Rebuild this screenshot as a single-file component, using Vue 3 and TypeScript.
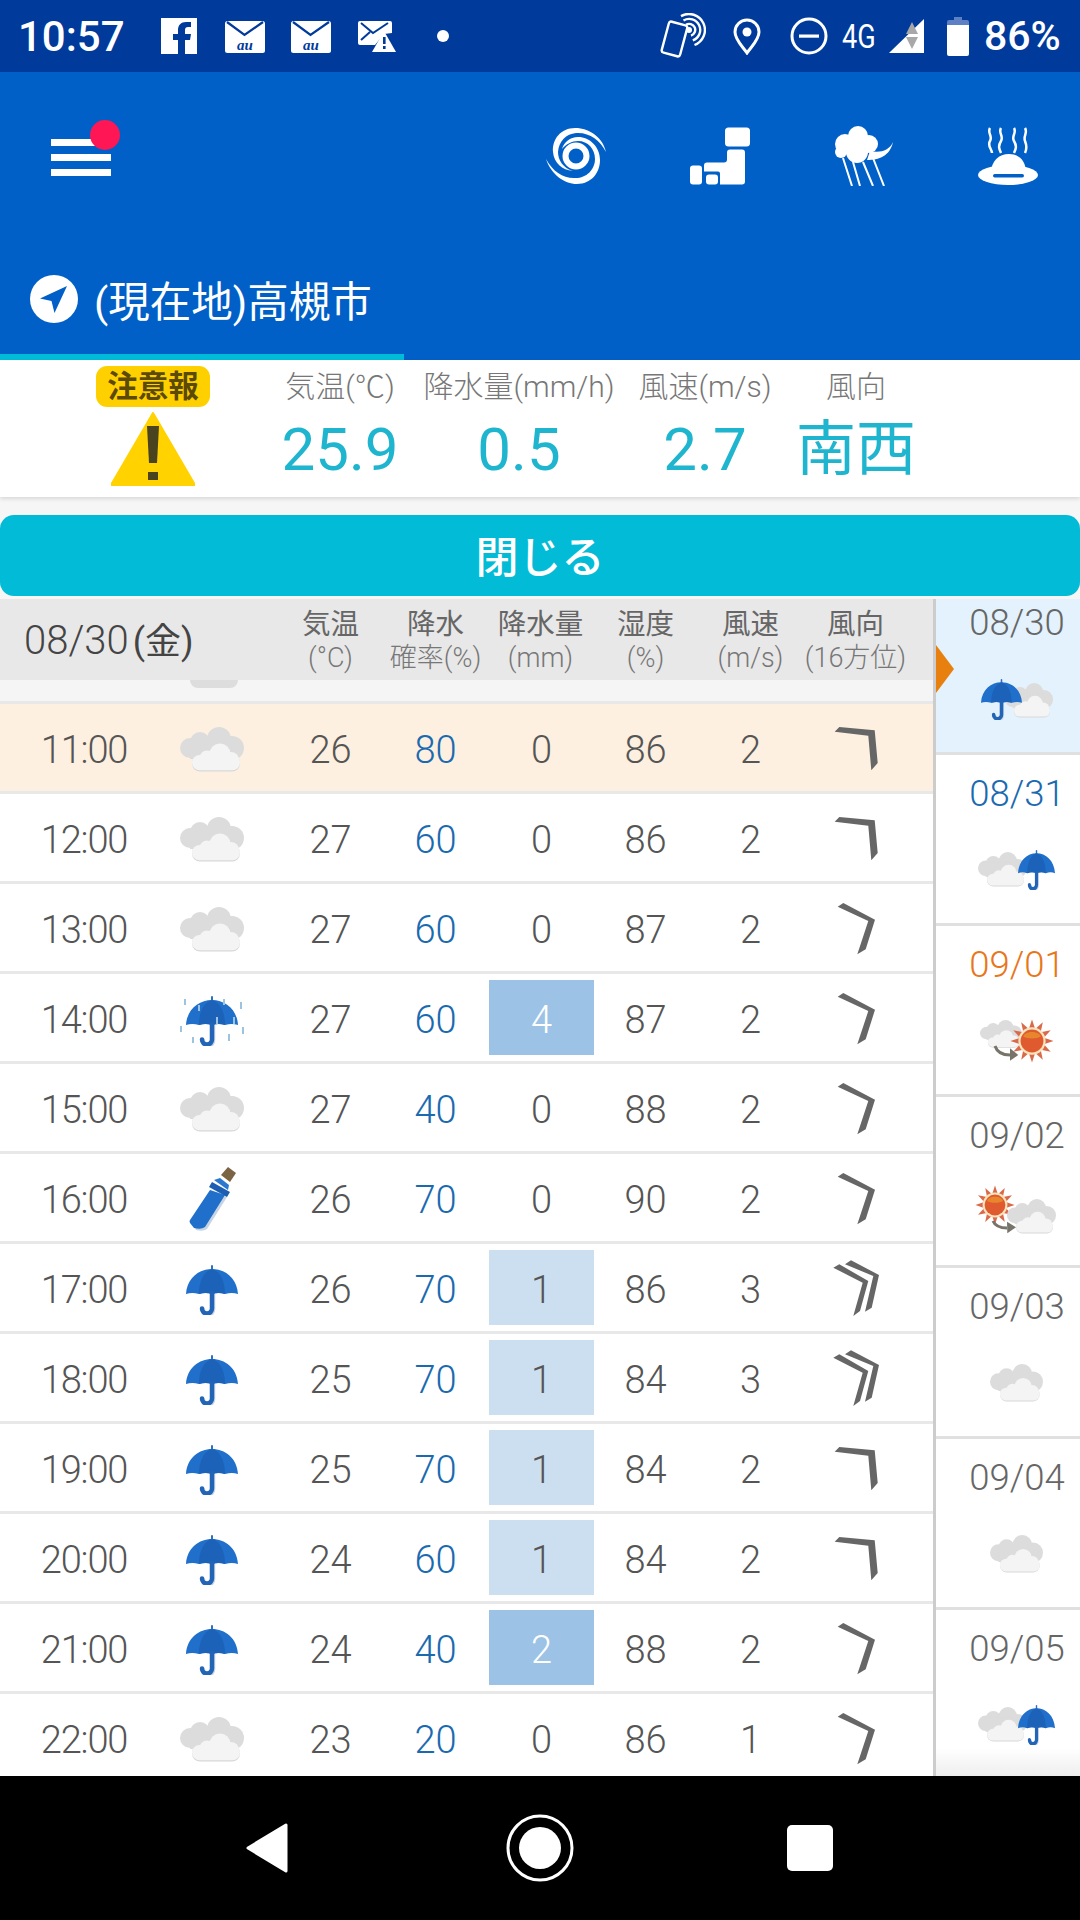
<script setup lang="ts">
type Dir = 'a' | 'b' | 'c'
interface Row { t: string; icon: string; temp: number; prob: number; rain: number; hum: number; wind: number; dir: Dir; now?: boolean }

const rows: Row[] = [
  { t: '11:00', icon: 'cloud', temp: 26, prob: 80, rain: 0, hum: 86, wind: 2, dir: 'a', now: true },
  { t: '12:00', icon: 'cloud', temp: 27, prob: 60, rain: 0, hum: 86, wind: 2, dir: 'a' },
  { t: '13:00', icon: 'cloud', temp: 27, prob: 60, rain: 0, hum: 87, wind: 2, dir: 'b' },
  { t: '14:00', icon: 'rain', temp: 27, prob: 60, rain: 4, hum: 87, wind: 2, dir: 'b' },
  { t: '15:00', icon: 'cloud', temp: 27, prob: 40, rain: 0, hum: 88, wind: 2, dir: 'b' },
  { t: '16:00', icon: 'closed', temp: 26, prob: 70, rain: 0, hum: 90, wind: 2, dir: 'b' },
  { t: '17:00', icon: 'umbrella', temp: 26, prob: 70, rain: 1, hum: 86, wind: 3, dir: 'c' },
  { t: '18:00', icon: 'umbrella', temp: 25, prob: 70, rain: 1, hum: 84, wind: 3, dir: 'c' },
  { t: '19:00', icon: 'umbrella', temp: 25, prob: 70, rain: 1, hum: 84, wind: 2, dir: 'a' },
  { t: '20:00', icon: 'umbrella', temp: 24, prob: 60, rain: 1, hum: 84, wind: 2, dir: 'a' },
  { t: '21:00', icon: 'umbrella', temp: 24, prob: 40, rain: 2, hum: 88, wind: 2, dir: 'b' },
  { t: '22:00', icon: 'cloud', temp: 23, prob: 20, rain: 0, hum: 86, wind: 1, dir: 'b' },
]

const heads = [
  { a: '気温', b: '(°C)' },
  { a: '降水', b: '確率(%)' },
  { a: '降水量', b: '(mm)' },
  { a: '湿度', b: '(%)' },
  { a: '風速', b: '(m/s)' },
  { a: '風向', b: '(16方位)' },
]

const stats = [
  { label: '気温(℃)', value: '25.9' },
  { label: '降水量(mm/h)', value: '0.5' },
  { label: '風速(m/s)', value: '2.7' },
  { label: '風向', value: '南西' },
]

const days = [
  { d: '08/30', tone: 'sel', kind: 'uc' },
  { d: '08/31', tone: 'blue', kind: 'cu' },
  { d: '09/01', tone: 'orange', kind: 'cs' },
  { d: '09/02', tone: '', kind: 'sc' },
  { d: '09/03', tone: '', kind: 'c' },
  { d: '09/04', tone: '', kind: 'c' },
  { d: '09/05', tone: '', kind: 'cu' },
]

const rays: string[] = Array.from({ length: 12 }, (_, i) => {
  const a = (i * Math.PI) / 6
  const pt = (r: number, o: number) => `${(r * Math.cos(a + o)).toFixed(2)},${(r * Math.sin(a + o)).toFixed(2)}`
  return `${pt(24.5, 0)} ${pt(14, 0.26)} ${pt(14, -0.26)}`
})
</script>

<template>
  <div class="page">
    <svg class="defs" aria-hidden="true">
      <defs>
        <symbol id="cloud" viewBox="0 0 64 45" preserveAspectRatio="none">
          <g fill="#dcdcdc">
            <circle cx="10" cy="21" r="10" />
            <circle cx="20" cy="15" r="10" />
            <circle cx="39" cy="12" r="12" />
            <circle cx="52" cy="21" r="12" />
            <rect x="10" y="14" width="42" height="18" />
          </g>
          <rect x="12" y="28" width="48" height="16.500" rx="8" fill="#d8d8d8" />
          <g fill="#f4f4f4">
            <circle cx="40" cy="27" r="10.500" />
            <circle cx="27" cy="31" r="7.500" />
            <circle cx="51" cy="33" r="8" />
            <rect x="12" y="28" width="48" height="15.200" rx="7.500" />
          </g>
        </symbol>
        <symbol id="umbrella" viewBox="0 0 52 50" preserveAspectRatio="none">
          <path d="M26 28V43.500a5 5 0 0 1-10 0" fill="none" stroke="#c6d6ea" stroke-width="4.500" stroke-linecap="round" transform="translate(1 1)" />
          <rect x="25" y="0" width="2" height="6" rx="1" fill="#2f6fbe" />
          <path d="M0 29C1 13 13 4 26 4s25 9 26 25q-6-2.200-13 0q-6-2.200-13 0q-6-2.200-13 0q-7-2.200-13 0Z" fill="#1f6fcb" />
          <path d="M26 4C18 6 13 16 13 29q6-2.200 13 0q7-2.200 13 0C39 16 34 6 26 4Z" fill="#1c62b8" />
          <path d="M26 28V43.500a5 5 0 0 1-10 0" fill="none" stroke="#2264b5" stroke-width="4.500" stroke-linecap="round" />
        </symbol>
        <symbol id="sun" viewBox="-25 -25 50 50">
          <polygon v-for="r in rays" :key="r" :points="r" fill="#d9694a" />
          <circle r="15.500" fill="#fbe3bb" />
          <circle r="13" fill="#df5a2e" />
          <path d="M-10-5C-8-12 8-12 10-5C6-2-6-2-10-5Z" fill="#e8862e" />
        </symbol>
        <polygon id="chev-a" points="-21.300,-18.300 -16.700,-23 18.700,-19.700 21.700,13 15.300,20.300 12.300,-14.300" fill="#666" />
        <polygon id="chev-b" points="-18.300,-23.300 -12.700,-27 19,-10.300 9.700,19.300 1.300,24.300 12.300,-9" fill="#666" />
        <g id="chev-c" fill="#666">
          <polygon points="-11,-25.700 -5,-29.700 23,-15 15.700,17.700 9,21.700 17.300,-14" />
          <polygon points="-22.700,-22.300 -16.700,-25.700 12.300,-9 4,21 -2.700,26 6.700,-7.300" />
        </g>
      </defs>
    </svg>

    <header class="status">
      <span class="clock">10:57</span>
      <svg class="st st-f" viewBox="0 0 36 36"><rect width="36" height="36" fill="#fff" /><path d="M24 36V22h5l1-6h-6v-4c0-2 1-3 3-3h3V4h-5c-5 0-8 3-8 8v4h-5v6h5v14Z" fill="#003a9b" /></svg>
      <svg class="st st-m1" viewBox="0 0 40 32"><rect width="40" height="32" rx="2.500" fill="#fff" /><path d="M2 1 19.500 14 38 1" fill="none" stroke="#003a9b" stroke-width="2.200" /><text x="20" y="29" text-anchor="middle" class="au">au</text></svg>
      <svg class="st st-m2" viewBox="0 0 40 32"><rect width="40" height="32" rx="2.500" fill="#fff" /><path d="M2 1 19.500 14 38 1" fill="none" stroke="#003a9b" stroke-width="2.200" /><text x="20" y="29" text-anchor="middle" class="au">au</text></svg>
      <svg class="st st-m3" viewBox="0 0 38 31"><path d="M2 0H32a2 2 0 0 1 2 2V12L26 13 17 24H2a2 2 0 0 1-2-2V2a2 2 0 0 1 2-2Z" fill="#fff" /><path d="M3 2 15 12 30 2M3 19l9-8" fill="none" stroke="#003a9b" stroke-width="2" /><path d="M26 10 38 31H14Z" fill="#fff" /><rect x="25" y="16" width="2.600" height="7" fill="#003a9b" /><rect x="25" y="25" width="2.600" height="3" fill="#003a9b" /></svg>
      <span class="st-dot"></span>
      <svg class="st st-nfc" viewBox="0 0 46 46" fill="none" stroke="#fff" stroke-width="2.400">
        <path d="M26 11.800A6 6 0 1 1 31 22.600M23.500 7.500A11 11 0 1 1 32.800 27.300M21 3.100A16 16 0 1 1 34.500 32" />
        <circle cx="29" cy="17" r="3" fill="#fff" stroke="none" />
        <rect x="5" y="10" width="19" height="32" rx="2.500" fill="#003a9b" transform="rotate(15 14.500 26)" />
      </svg>
      <svg class="st st-pin" viewBox="0 0 28 37"><path d="M14 2a12 12 0 0 1 12 12c0 8-8 15-12 21C10 29 2 22 2 14A12 12 0 0 1 14 2Z" fill="none" stroke="#fff" stroke-width="3" /><circle cx="14" cy="14" r="4.500" fill="#fff" /></svg>
      <svg class="st st-dnd" viewBox="0 0 38 38"><circle cx="19" cy="19" r="17" fill="none" stroke="#fff" stroke-width="3" /><rect x="9" y="17.500" width="20" height="3.200" fill="#fff" /></svg>
      <span class="lte">4G</span>
      <svg class="st st-sig" viewBox="0 0 35 34"><path d="M35 0V34H0Z" fill="#fff" /><path d="M23 3 29 15H17Z" fill="#a8a8a8" /><path d="M17 18H29L23 30Z" fill="#a8a8a8" /></svg>
      <svg class="st st-bat" viewBox="0 0 22 39"><path d="M7 0H15V3H20a2 2 0 0 1 2 2V8H0V5a2 2 0 0 1 2-2H7Z" fill="#5d7fc4" /><path d="M0 8H22V37a2 2 0 0 1-2 2H2a2 2 0 0 1-2-2Z" fill="#fff" /></svg>
      <span class="pct">86%</span>
    </header>

    <section class="appbar">
      <div class="tools">
        <div class="burger">
          <i></i><i></i><i></i>
          <b class="dot"></b>
        </div>
        <svg class="tool tool-spiral" viewBox="0 0 60 58" fill="#fff">
          <path d="M60 25C57 11 44 1 29 1C15 1 6 12 7 25C8 36 16 43 27 44C17 41 12 33 12 25C13 14 20 7 30 6C43 5 54 13 60 25Z" />
          <path d="M0 32C5 47 18 57 31 57C45 57 54 46 54 33C54 20 44 10 32 10C24 10 18 15 16 22C20 17 26 14 32 14C42 14 49 22 49 32C49 43 40 51 30 51C18 52 7 45 0 32Z" />
          <circle cx="30" cy="29" r="10.500" fill="none" stroke="#fff" stroke-width="6" />
        </svg>
        <svg class="tool tool-bars" viewBox="0 0 60 57" fill="#fff">
          <rect x="35" y="0" width="25" height="19" rx="3.500" />
          <path d="M40 22H52Q55 22 55 25V54Q55 57 52 57H30V46Q30 44 28 44H14V38Q14 35 17 35H34Q37 35 37 32V25Q37 22 40 22Z" />
          <rect x="0" y="38" width="12" height="19" rx="3" />
          <rect x="16" y="47" width="12" height="10" rx="3" />
        </svg>
        <svg class="tool tool-rain" viewBox="0 0 58 60" fill="#fff">
          <circle cx="23" cy="10" r="10" /><circle cx="10" cy="18" r="10" /><circle cx="6" cy="26" r="6" /><circle cx="34" cy="18" r="9" /><circle cx="22" cy="26" r="11" />
          <path d="M35 25C45 27 54 25 58 16C55 30 44 34 32 34Z" />
          <path d="M8 32 17 60M18 36 25 60M28 36 38 60M38 32 49 60" stroke="#fff" stroke-width="2" fill="none" />
        </svg>
        <svg class="tool tool-hat" viewBox="0 0 60 58" fill="#fff">
          <path d="M12 1c-3 5 3 8 0 13s2 8 2 12M23 1c-3 5 3 8 0 13s-2 8 0 12M36 1c3 5-3 8 0 13s2 8 0 12M47 1c3 5-2 8 0 13s2 8 0 12" fill="none" stroke="#fff" stroke-width="2.500" />
          <path d="M13 46C13 34 21 27 31 27C41 27 48 34 48 46Z" />
          <ellipse cx="30" cy="48" rx="30" ry="10" />
          <rect x="15" y="47" width="31" height="3.500" rx="1.700" fill="#0060c8" />
        </svg>
      </div>
      <div class="tab">
        <svg class="loc" viewBox="0 0 48 48"><circle cx="24" cy="24" r="24" fill="#fff" /><path d="M37 11 10 23.500 21.500 26 24.500 38Z" fill="#0060c8" /></svg>
        <span class="place">(現在地)高槻市</span>
      </div>
    </section>

    <section class="info">
      <div class="alert">
        <span class="badge">注意報</span>
        <svg class="warn" viewBox="0 0 84 74"><path d="M42 1 84 73H0Z" fill="#ffd200" stroke="#ffd200" stroke-width="2" stroke-linejoin="round" /><path d="M36 14H48L46 51H38Z" fill="#4a4320" /><rect x="37" y="60" width="10" height="8" fill="#4a4320" /></svg>
      </div>
      <div class="stats">
        <div v-for="s in stats" :key="s.label" class="stat">
          <span class="stat-l">{{ s.label }}</span>
          <span class="stat-v">{{ s.value }}</span>
        </div>
      </div>
    </section>

    <div class="close-wrap">
      <button class="close" type="button">閉じる</button>
    </div>

    <section class="body">
      <div class="main">
        <div class="thead grid">
          <div class="date">08/30<span class="wk">(金)</span></div>
          <div v-for="h in heads" :key="h.a" class="th">
            <span class="th-a">{{ h.a }}</span>
            <span class="th-b">{{ h.b }}</span>
          </div>
        </div>
        <div class="peek"><span class="peek-blob"></span></div>
        <div v-for="r in rows" :key="r.t" class="row grid" :class="{ now: r.now }">
          <div class="cell time">{{ r.t }}</div>
          <div class="cell icon">
            <svg v-if="r.icon === 'cloud'" class="i-cloud"><use href="#cloud" width="64" height="45" /></svg>
            <svg v-else-if="r.icon === 'umbrella'" class="i-umb"><use href="#umbrella" width="52" height="50" /></svg>
            <svg v-else-if="r.icon === 'rain'" class="i-rainy" viewBox="-6 -4 64 56">
              <use href="#umbrella" width="52" height="50" />
              <g fill="#9cc3e0">
                <rect x="-2" y="3" width="2" height="6" /><rect x="12" y="9" width="2" height="6" /><rect x="37" y="3" width="2" height="6" /><rect x="54" y="6" width="2" height="7" />
                <rect x="47" y="21" width="2" height="7" /><rect x="-6" y="30" width="2" height="6" /><rect x="30" y="21" width="2" height="7" /><rect x="6" y="41" width="2" height="6" /><rect x="42" y="38" width="2" height="7" /><rect x="56" y="31" width="2" height="7" />
              </g>
            </svg>
            <svg v-else class="i-closed" viewBox="15 5 55 70">
              <path d="M42 32 57 37 37 69Q33 72 26 70L22 62Z" fill="#c6d4e4" />
              <path d="M40 30 55 35 35 67Q31 70 24 68L20 63Q19 61 20 60Z" fill="#1f6fcb" />
              <path d="M44 20 50 18 59 25 58 30Z" fill="#2a78d0" />
              <path d="M39 27 42 22 60 32 57 37Z" fill="#1c5fb2" />
              <path d="M51 15 58 7 66 13 60 22Z" fill="#7b6443" />
            </svg>
          </div>
          <div class="cell">{{ r.temp }}</div>
          <div class="cell prob">{{ r.prob }}</div>
          <div class="cell rain" :class="`rain-${r.rain}`">{{ r.rain }}</div>
          <div class="cell">{{ r.hum }}</div>
          <div class="cell">{{ r.wind }}</div>
          <div class="cell">
            <svg class="i-dir" viewBox="-30 -32 60 64"><use :href="`#chev-${r.dir}`" /></svg>
          </div>
        </div>
      </div>

      <aside class="side">
        <div class="pointer"></div>
        <div v-for="d in days" :key="d.d" class="day" :class="d.tone">
          <span class="day-d">{{ d.d }}</span>
          <svg class="day-i" viewBox="0 0 80 42">
            <template v-if="d.kind === 'uc'">
              <use href="#cloud" x="29" y="5" width="48" height="35" />
              <use href="#umbrella" x="5" y="1" width="41" height="41" />
            </template>
            <template v-else-if="d.kind === 'cu'">
              <use href="#cloud" x="2" y="3" width="49" height="35" />
              <use href="#umbrella" x="42" y="1" width="37" height="40" />
            </template>
            <template v-else-if="d.kind === 'cs'">
              <use href="#cloud" x="4" y="0" width="42" height="28" />
              <path d="M19 26Q22 35 34 35" fill="none" stroke="#77756a" stroke-width="3" />
              <polygon points="34,28.300 42.300,35 34,40.700" fill="#77756a" />
              <use href="#sun" x="34" y="-1" width="44" height="44" />
            </template>
            <template v-else-if="d.kind === 'sc'">
              <use href="#sun" x="-1" y="-6" width="40" height="40" />
              <use href="#cloud" x="31" y="8" width="49" height="35" />
              <path d="M17 30Q20 37 31 37" fill="none" stroke="#77756a" stroke-width="3" />
              <polygon points="31,30.700 40,36.300 31.300,42.300" fill="#77756a" />
            </template>
            <use v-else href="#cloud" x="14" y="2" width="53" height="38" />
          </svg>
        </div>
        <div class="fade"></div>
      </aside>
    </section>

    <footer class="nav">
      <svg class="nav-b" viewBox="0 0 44 50"><path d="M41 2V48L3 25Z" fill="#fff" stroke="#fff" stroke-width="3" stroke-linejoin="round" /></svg>
      <svg class="nav-h" viewBox="0 0 68 68"><circle cx="34" cy="34" r="32" fill="none" stroke="#fff" stroke-width="3" /><circle cx="34" cy="34" r="21" fill="#fff" /></svg>
      <span class="nav-s"></span>
    </footer>
  </div>
</template>

<style scoped>
.page {
  width: 1080px;
  height: 1920px;
  display: flex;
  flex-direction: column;
  overflow: hidden;
  background: #fff;
  font-family: Roboto, "Noto Sans CJK JP", sans-serif;
}
.defs { position: absolute; width: 0; height: 0; }

/* status bar */
.status {
  height: 72px;
  flex: none;
  background: #003a9b;
  color: #fff;
  display: flex;
  align-items: center;
  padding-left: 18px;
}
.clock { font-size: 42px; font-weight: 500; width: 143px; flex: none; }
.st { flex: none; display: block; }
.st-f { width: 36px; height: 36px; }
.st-m1 { width: 40px; height: 32px; margin-left: 28px; margin-top: 2px; }
.st-m2 { width: 40px; height: 32px; margin-left: 26px; margin-top: 2px; }
.st-m3 { width: 38px; height: 31px; margin-left: 27px; margin-top: 1px; }
.au { font-family: "Liberation Serif", serif; font-style: italic; font-weight: 700; font-size: 15px; fill: #003a9b; }
.st-dot { width: 12px; height: 12px; border-radius: 50%; background: #fff; margin-left: 41px; flex: none; }
.st-nfc { width: 46px; height: 46px; margin-left: 211px; }
.st-pin { width: 28px; height: 37px; margin-left: 27px; }
.st-dnd { width: 38px; height: 38px; margin-left: 29px; }
.lte { font-size: 33px; width: 38px; margin-left: 14px; margin-right: 9px; flex: none; transform: scaleX(0.82); transform-origin: left; }
.st-sig { width: 35px; height: 34px; }
.st-bat { width: 22px; height: 39px; margin-left: 23px; }
.pct { font-size: 41px; font-weight: 500; margin-left: 15px; flex: none; }

/* app bar */
.appbar {
  height: 288px;
  flex: none;
  background: #0060c8;
  color: #fff;
  display: flex;
  flex-direction: column;
}
.tools {
  height: 180px;
  display: flex;
  align-items: flex-start;
  padding: 54px 0 0 51px;
}
.burger {
  position: relative;
  width: 60px;
  height: 50px;
  margin-top: 13px;
  display: flex;
  flex-direction: column;
  gap: 8px;
}
.burger i { display: block; height: 7px; background: #fff; }
.dot { position: absolute; left: 39px; top: -19px; width: 30px; height: 30px; border-radius: 50%; background: #ff1654; }
.tool { flex: none; display: block; }
.tool-spiral { width: 60px; height: 58px; margin-left: 435px; margin-top: 1px; }
.tool-bars { width: 60px; height: 58px; margin-left: 84px; margin-top: 1px; }
.tool-rain { width: 58px; height: 60px; margin-left: 85px; }
.tool-hat { width: 60px; height: 60px; margin-left: 85px; }
.tab {
  height: 108px;
  box-sizing: border-box;
  width: 404px;
  border-bottom: 6px solid #00bcd8;
  display: flex;
  align-items: center;
  padding: 0 0 8px 30px;
  flex: none;
  white-space: nowrap;
}
.loc { width: 48px; height: 48px; flex: none; }
.place { font-size: 41.5px; margin-left: 16px; font-weight: 400; }

/* summary */
.info {
  height: 137px;
  flex: none;
  background: #fff;
  display: flex;
  box-shadow: 0 2px 4px rgba(0, 0, 0, 0.12);
  position: relative;
}
.alert {
  width: 130px;
  margin-left: 88px;
  display: flex;
  flex-direction: column;
  align-items: center;
  padding-top: 6px;
}
.badge {
  width: 114px;
  height: 41px;
  background: #ffd000;
  border-radius: 11px;
  color: #5c4a00;
  font-size: 30.5px;
  font-weight: 700;
  line-height: 41px;
  text-align: center;
}
.warn { width: 84px; height: 74px; margin-top: 5px; }
.stats {
  margin-left: 46px;
  display: grid;
  grid-template-columns: 152px 206px 166px 136px;
}
.stat { display: flex; flex-direction: column; align-items: center; padding-top: 9px; white-space: nowrap; }
.stat-l { font-size: 30px; line-height: 36px; color: #777; font-weight: 300; }
.stat-v { font-size: 60px; line-height: 70px; margin-top: 10px; color: #1fb5cf; font-weight: 400; }

/* close */
.close-wrap {
  flex: none;
  height: 102px;
  background: #f6f6f6;
  padding-top: 18px;
  box-sizing: border-box;
}
.close {
  display: block;
  width: 100%;
  height: 81px;
  border: 0;
  border-radius: 14px;
  background: #02bbd6;
  color: #fff;
  font-family: inherit;
  font-size: 43px;
  font-weight: 500;
  padding: 0 0 4px;
}

/* body */
.body { flex: 1; min-height: 0; display: flex; overflow: hidden; }
.main { flex: 1; min-width: 0; overflow: hidden; }
.grid { display: grid; grid-template-columns: 168px 110px repeat(6, 105px); }
.thead { height: 81px; background: #e8e8e8; color: #666; }
.date { grid-column: span 2; font-size: 40px; font-weight: 300; padding-left: 24px; line-height: 84px; color: #444; white-space: nowrap; }
.wk { font-size: 36px; margin-left: 4px; font-weight: 400; }
.th { display: flex; flex-direction: column; align-items: center; padding-top: 9px; white-space: nowrap; }
.th-a { font-size: 28.5px; line-height: 33px; font-weight: 400; color: #666; }
.th-b { font-size: 27px; line-height: 34px; font-weight: 300; color: #777; }
.peek { background: #f5f5f5; border-bottom: 3px solid #e8e8e8; height: 21px; }
.peek-blob { display: block; margin-left: 190px; width: 48px; height: 8px; background: #ddd; border-radius: 0 0 8px 8px; }
.row { height: 90px; box-sizing: border-box; border-bottom: 3px solid #e8e8e8; }
.row.now { background: #fdf0e0; }
.cell {
  display: flex;
  align-items: center;
  justify-content: center;
  padding-top: 4px;
  font-size: 38px;
  font-weight: 300;
  color: #555;
}
.time { letter-spacing: -1.2px; }
.icon { padding-right: 22px; }
.prob { color: #1a6ab0; }
.rain { margin: 6px -1px 6px 1px; }
.rain-1 { background: #cbdff0; }
.rain-2, .rain-4 { background: #9cc3e6; color: #fff; }
.i-cloud { width: 64px; height: 45px; }
.i-umb { width: 52px; height: 50px; }
.i-rainy { width: 64px; height: 56px; }
.i-closed { width: 55px; height: 70px; }
.i-dir { width: 60px; height: 64px; }

/* side */
.side {
  position: relative;
  width: 147px;
  flex: none;
  box-sizing: border-box;
  border-left: 3px solid #ccc;
  overflow: hidden;
}
.pointer {
  position: absolute;
  left: 0;
  top: 46px;
  width: 0;
  height: 0;
  border-top: 24px solid transparent;
  border-bottom: 24px solid transparent;
  border-left: 18px solid #e8800f;
  z-index: 1;
}
.day {
  height: 171px;
  box-sizing: border-box;
  border-bottom: 3px solid #e0e0e0;
  padding: 19px 0 0 18px;
  display: flex;
  flex-direction: column;
  align-items: center;
  color: #666;
}
.day.sel { height: 156px; padding-top: 4px; background: #e3f2fd; }
.day.blue .day-d { color: #1a6ab0; }
.day.orange .day-d { color: #e8761a; }
.day-d { font-size: 36.5px; line-height: 40px; font-weight: 300; }
.day-i { width: 80px; height: 42px; margin-top: 35px; margin-left: -2px; overflow: visible; flex: none; }
.fade {
  position: absolute;
  left: 0;
  right: 0;
  bottom: 0;
  height: 28px;
  background: linear-gradient(rgba(238, 238, 238, 0), #eee);
}

/* nav */
.nav {
  height: 144px;
  flex: none;
  background: #000;
  display: flex;
  align-items: center;
  padding-left: 245px;
  box-sizing: border-box;
}
.nav-b { width: 44px; height: 50px; flex: none; }
.nav-h { width: 68px; height: 68px; flex: none; margin-left: 217px; }
.nav-s { width: 46px; height: 46px; flex: none; margin-left: 213px; background: #fff; border-radius: 5px; }
</style>
